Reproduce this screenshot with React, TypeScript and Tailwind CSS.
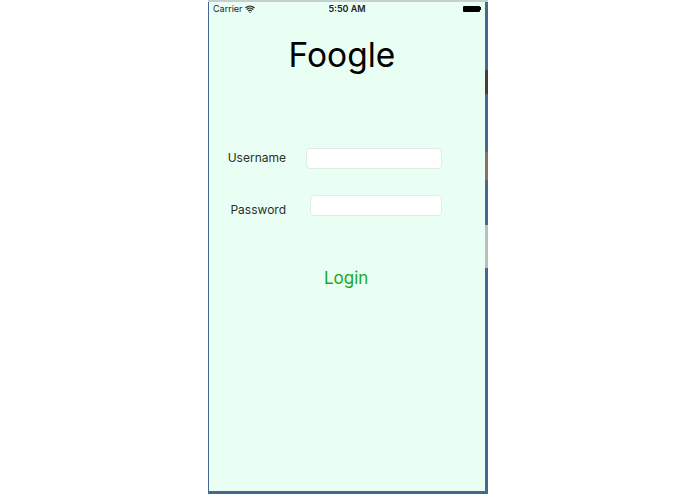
import { Wifi } from 'lucide-react'

const stripe = [
  { h: 'h-[68px]', c: 'bg-[#46688f]' },
  { h: 'h-[24px]', c: 'bg-[#4b3a36]' },
  { h: 'h-[58px]', c: 'bg-[#46688f]' },
  { h: 'h-[28px]', c: 'bg-[#8a6f66]' },
  { h: 'h-[45px]', c: 'bg-[#46688f]' },
  { h: 'h-[43px]', c: 'bg-[#b9bdbd]' },
  { h: 'h-[228px]', c: 'bg-[#46688f]' },
]

export default function App() {
  return (
    <div className="w-[695px] h-[494px] bg-white flex justify-center overflow-hidden" style={{ fontFamily: 'Inter, "Liberation Sans", sans-serif' }}>
      <div className="w-[280px] ml-[1px] h-full flex flex-col">
        <div className="h-[2px] bg-[#c6ced0]" />
        <div className="flex flex-1 min-h-0">
          <div className="w-[1px] bg-[#46688f]" />
          <div className="w-[276px] bg-[#e9fff4] flex flex-col">
            <div className="h-[13px] pl-[4px] pr-[4px] flex items-center text-[9px] text-[#222]">
              <div className="flex-1 flex items-center gap-[2px]">
                <span>Carrier</span>
                <Wifi size={10} strokeWidth={3} />
              </div>
              <span className="font-semibold">5:50 AM</span>
              <div className="flex-1 flex justify-end">
                <div className="flex items-center">
                  <div className="w-[17px] h-[6px] bg-black rounded-[1px]" />
                  <div className="w-[1px] h-[3px] bg-black" />
                </div>
              </div>
            </div>
            <h1 className="mt-[18px] pr-[10px] text-center text-[33.5px] leading-[44px] text-black font-normal">Foogle</h1>
            <div className="mt-[71px] flex items-center pr-[43px]">
              <span className="w-[77px] -mt-[2px] text-right text-[12px] text-[#2a2f2d]">Username</span>
              <div className="ml-[20px] flex-1 h-[21px] bg-white border border-[#e2ebe6] rounded-[4px]" />
            </div>
            <div className="mt-[26px] flex items-start pr-[43px]">
              <span className="w-[77px] mt-[6px] text-right text-[12px] text-[#2a2f2d]">Password</span>
              <div className="ml-[24px] flex-1 h-[21px] bg-white border border-[#e2ebe6] rounded-[4px]" />
            </div>
            <div className="mt-[46px] pl-[115px] text-[17px] leading-[26px] text-[#1aa81a]">Login</div>
          </div>
          <div className="w-[3px] flex flex-col">
            {stripe.map((s, i) => (
              <div key={i} className={`${s.h} ${s.c} shrink-0`} />
            ))}
          </div>
        </div>
        <div className="h-[3px] bg-[#46688f]" />
      </div>
    </div>
  )
}
